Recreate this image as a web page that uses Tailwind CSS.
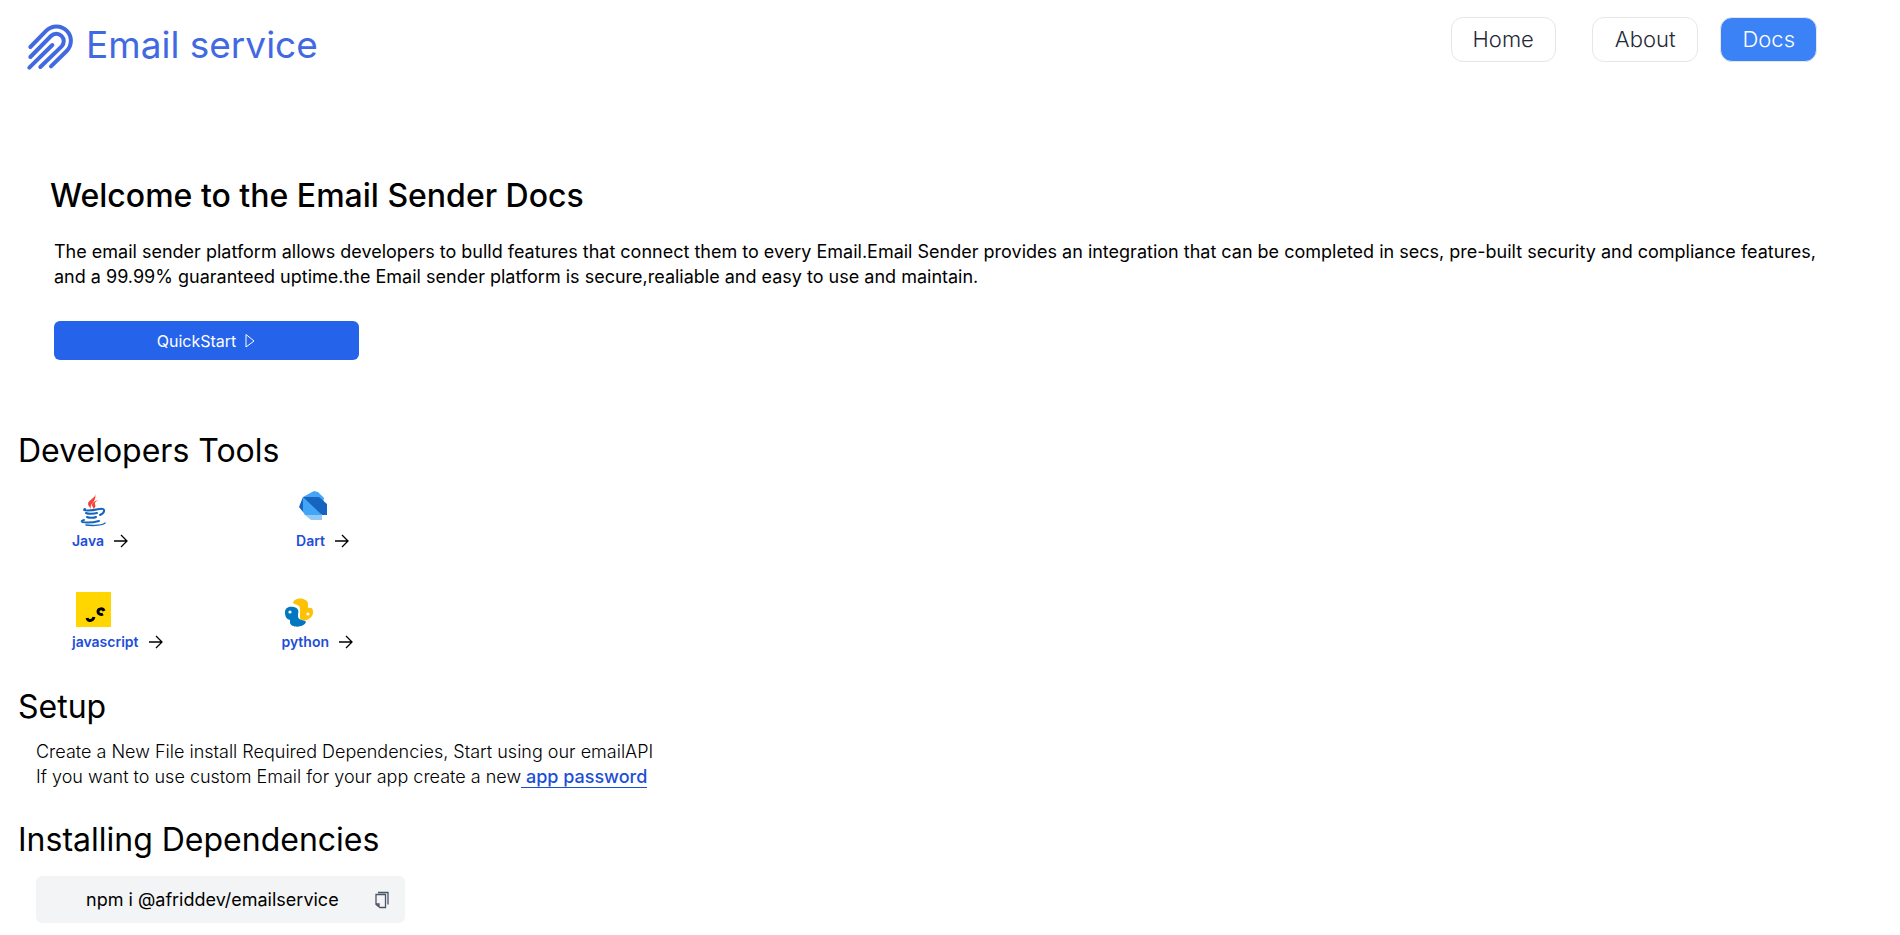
<!DOCTYPE html>
<html lang="en">
<head>
<meta charset="utf-8">
<title>Email service Docs</title>
<script src="https://cdn.jsdelivr.net/npm/@tailwindcss/browser@4"></script>
</head>
<body class="bg-white font-['Inter',sans-serif] text-black">
<header class="flex items-start justify-between pl-7 pr-[83px] pt-[17px]">
  <a href="#" class="mt-1 flex items-center gap-3 text-[#4169e1]">
    <svg class="size-[50px] -ml-1" viewBox="73 64 150 150" fill="none" stroke="currentColor" stroke-width="12" stroke-linecap="round" stroke-linejoin="round">
      <path d="M92 142 140 93A43 43 0 0 1 201 154L154 200"/>
      <path d="M92 172 154 109A22 22 0 0 1 186 140L122 202"/>
      <path d="M89 204 158 136"/>
    </svg>
    <span class="pb-0.5 text-[37px] leading-10">Email service</span>
  </a>
  <nav class="flex items-center text-[22px] font-light leading-[33px] text-[#1f2937]">
    <a href="#" class="mr-9 rounded-xl border border-gray-200 px-[21px] py-[5px]">Home</a>
    <a href="#" class="mr-[22px] rounded-xl border border-gray-200 px-[22px] py-[5px]">About</a>
    <a href="#" class="rounded-xl border border-gray-200 bg-[#3b82f6] px-[21px] py-[5px] text-white">Docs</a>
  </nav>
</header>
<main class="px-[18px]">
  <section class="mt-[105px] pl-8">
    <h1 class="text-[32px] font-medium leading-10">Welcome to the Email Sender Docs</h1>
    <p class="mt-[23px] pl-1 pr-12 text-lg leading-[25px]">The email sender platform allows developers to bulld features that connect them to every Email.Email Sender provides an integration that can be completed in secs, pre-built security and compliance features, and a 99.99% guaranteed uptime.the Email sender platform is secure,realiable and easy to use and maintain.</p>
    <button class="ml-1 mt-8 flex h-[39px] w-[305px] items-center justify-center gap-2 rounded-md bg-[#2563eb] text-base text-white">QuickStart
      <svg class="h-4 w-3" viewBox="0 0 12 16" fill="none" stroke="currentColor" stroke-linejoin="round"><path d="M2 1.500V14L10 8Z"/></svg>
    </button>
  </section>
  <section class="mt-[71px]">
    <h2 class="text-[32px] leading-10">Developers Tools</h2>
    <div class="ml-[54px] mt-4 flex w-[281px] flex-col gap-[41px] text-sm font-semibold leading-5 text-[#1d4ed8]">
      <div class="flex justify-between pr-1">
        <a href="#" class="flex flex-col gap-0.5">
          <svg class="size-[42px]" viewBox="0 0 42 42" fill="none" stroke-linecap="round">
            <path fill="#f44336" d="M23 7c1 4-7 6-7 10 0 2 2 3 3 5-1-4 1-5 3-8 1-2 2-4 1-7zM26 13c-4 1-6 3-6 5 0 2 2 2 1 4 5-3 1-4 2-6 0-1 2-2 3-3z"/>
            <g stroke="#1565c0" stroke-width="2"><path d="M13 22c-4 2 6 2 14 0M28 22c6-1 5 4 0 6M14 26c2 1 8 1 11 0M15 30c2 1 7 1 9 0M12 33c-7 2 4 4 15 1"/><path stroke-width="1.500" d="M14 38c8 1 18 0 19-2"/></g>
          </svg>
          <span class="flex items-center gap-2.5">Java
            <svg class="size-[14px] text-black" viewBox="0 0 14 14" fill="none" stroke="currentColor" stroke-width="1.300"><path d="M0 7h13M7 1l6 6-6 6"/></svg>
          </span>
        </a>
        <a href="#" class="flex flex-col gap-0.5">
          <svg class="size-[42px]" viewBox="0 0 42 42">
            <path fill="#42a5f5" d="M7 10 18 4l4 1 6 6-3 17H9l-2-3z"/>
            <path fill="#1565c0" d="M7 10 3 20l4 5zM7 10h16l8 7v11h-5z"/>
            <path fill="#90caf9" d="M9 28h17v5H15z"/>
          </svg>
          <span class="flex items-center gap-2.5">Dart
            <svg class="size-[14px] text-black" viewBox="0 0 14 14" fill="none" stroke="currentColor" stroke-width="1.300"><path d="M0 7h13M7 1l6 6-6 6"/></svg>
          </span>
        </a>
      </div>
      <div class="flex justify-between">
        <a href="#" class="flex flex-col gap-[5px]">
          <svg class="ml-1 size-[35px]" viewBox="0 0 35 35" fill="none" stroke="#000" stroke-width="3"><path fill="#ffd600" stroke="none" d="M0 0h35v35H0z"/><path d="M11 26c1 4 6 3 7-1M28 19c-1-3-6-3-6 1 0 2 3 3 5 2"/></svg>
          <span class="flex items-center gap-2.5">javascript
            <svg class="size-[14px] text-black" viewBox="0 0 14 14" fill="none" stroke="currentColor" stroke-width="1.300"><path d="M0 7h13M7 1l6 6-6 6"/></svg>
          </span>
        </a>
        <a href="#" class="flex flex-col gap-[5px]">
          <svg class="size-[35px]" viewBox="0 0 35 35">
            <path fill="#ffc107" d="M12 11C13 5 25 5 27 11V16C34 14 33 24 29 26C26 29 22 29 19 27V16C18 12 14 13 12 11Z"/>
            <path fill="#0277bd" d="M4 20C4 15 9 14 13 15C17 16 18 18 17 22V25C18 29 25 28 25 30C23 36 10 36 9 31V28C5 27 4 24 4 20Z"/>
            <circle cx="9" cy="20" r="1.600" fill="#fff"/><circle cx="27" cy="22" r="1.600" fill="#fff"/>
          </svg>
          <span class="flex items-center gap-2.5">python
            <svg class="size-[14px] text-black" viewBox="0 0 14 14" fill="none" stroke="currentColor" stroke-width="1.300"><path d="M0 7h13M7 1l6 6-6 6"/></svg>
          </span>
        </a>
      </div>
    </div>
  </section>
  <section class="mt-[35px]">
    <h2 class="text-[32px] leading-10">Setup</h2>
    <p class="ml-[18px] mt-3 text-lg font-light leading-[25px]">Create a New File install Required Dependencies, Start using our emailAPI<br>If you want to use custom Email for your app create a new<a href="#" class="border-b border-[#1d4ed8] font-medium text-[#1d4ed8]"> app password</a></p>
  </section>
  <section class="mt-[31px]">
    <h2 class="text-[32px] leading-10">Installing Dependencies</h2>
    <div class="ml-[18px] mt-4 flex h-[47px] w-[369px] items-center justify-between rounded-md bg-gray-100 pl-[50px] pr-4 text-lg">
      <code class="font-['Inter',sans-serif]">npm i @afriddev/emailservice</code>
      <button aria-label="Copy" class="text-gray-600"><svg class="h-[18px] w-[14px]" viewBox="0 0 14 18" fill="none" stroke="currentColor" stroke-width="1.300"><path d="M3 1.500h10v12M1 3.500h9.500v13H5l-4-3zM1 13h3v3"/></svg></button>
    </div>
  </section>
</main>
</body>
</html>
